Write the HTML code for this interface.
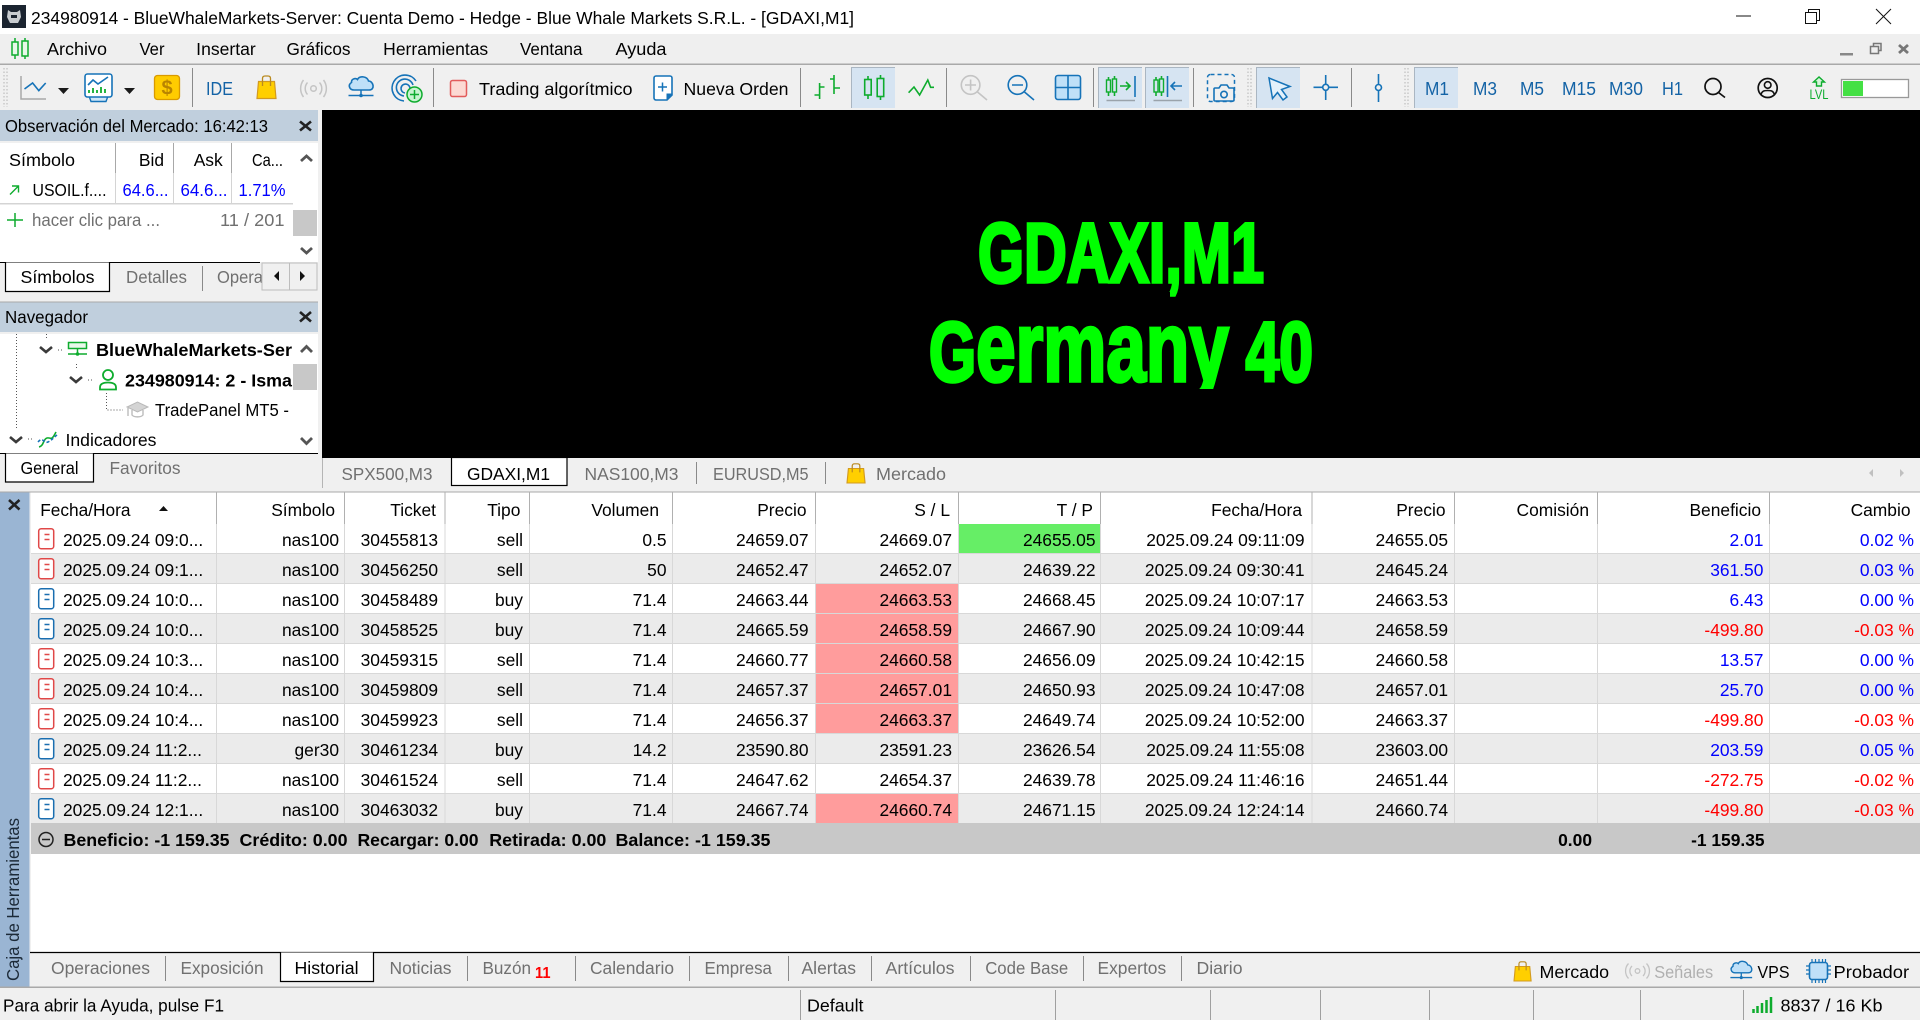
<!DOCTYPE html>
<html lang="es"><head><meta charset="utf-8"><title>GDAXI,M1</title>
<style>
html,body{margin:0;padding:0;width:1920px;height:1020px;overflow:hidden;background:#f0f0f0}
svg{display:block;position:absolute;left:0;top:0}
text{font-family:"Liberation Sans",sans-serif;font-size:17.4px;fill:#000;white-space:pre}
.g{fill:#707070}.e{text-anchor:end}.b{font-weight:bold}.u{fill:#0000ff}.r{fill:#ff0000}.l{fill:#b0b0b0}
.m{fill:#1463a6;text-anchor:middle}
.s{fill:none;stroke:#1673b8;stroke-width:1.6}.k{fill:none;stroke:#0eac2e;stroke-width:1.6}.y{fill:none;stroke:#c4c4c4;stroke-width:1.6}
.sep{stroke:#8a8a8a;stroke-width:1}
.d{stroke:#555;stroke-width:1;stroke-dasharray:1 2;fill:none}
.c{fill:none;stroke:#3a3a3a;stroke-width:2.6}
.x{fill:none;stroke:#222;stroke-width:2.6}
.h{font-size:84.5px;fill:#00ff00;stroke:#00ff00;stroke-width:3.6;font-weight:bold}
</style></head><body>
<svg width="1920" height="1020" viewBox="0 0 1920 1020" xmlns="http://www.w3.org/2000/svg">
<defs>
<g id="or"><rect x="38.7" y="528.7" width="15" height="20" rx="2.5" fill="#fff" stroke="#e04848" stroke-width="1.5"/><path d="M44.5 534.5h5M44.5 539.5h5" stroke="#e04848" stroke-width="1.5"/></g>
<g id="ob"><rect x="38.7" y="528.7" width="15" height="20" rx="2.5" fill="#fff" stroke="#1a6eb0" stroke-width="1.5"/><path d="M44.5 534.5h5M44.5 539.5h5" stroke="#1a6eb0" stroke-width="1.5"/></g>
<g id="bag"><path d="M1.5 6.5H17.5L19 23.5H0Z" fill="#ffcf00" stroke="#d29a20" stroke-width="1.2"/><path d="M5.5 11V3.5Q5.500 1 8 1H11Q13.500 1 13.500 3.500V11" fill="none" stroke="#b98a20" stroke-width="1.3"/></g>
<g id="cl"><path d="M354 90C349.500 90 347.500 85 351.500 82.500C351 79 355.500 77.500 357.500 79.500C359.500 75.500 367 76 368.500 81C373.500 81 375.500 90 369 90Z" fill="#bfe0f8" stroke="#1673b8" stroke-width="1.600"/><path d="M348.500 95.500h25M361 90v5.500" stroke="#1673b8" stroke-width="1.500"/><circle cx="361" cy="95.500" r="1.800" fill="#1673b8"/></g>
</defs>

<!-- title bar -->
<rect width="1920" height="34" fill="#fff"/>
<rect x="2" y="5" width="24" height="23" fill="#1b2430"/>
<path d="M8 10l3 2h6l3-2 1 7-3 6h-8l-3-6z" fill="#c8ccd0"/><path d="M11 15h6v3h-6z" fill="#1b2430"/>
<text x="31" y="24" textLength="823" lengthAdjust="spacingAndGlyphs">234980914 - BlueWhaleMarkets-Server: Cuenta Demo - Hedge - Blue Whale Markets S.R.L. - [GDAXI,M1]</text>
<path d="M1736 16h15" stroke="#111" stroke-width="1"/>
<path d="M1805.500 12.500h11v11h-11zM1808.500 12.500v-3h11v11h-3" fill="none" stroke="#111" stroke-width="1"/>
<path d="M1876 9l15 15M1891 9l-15 15" stroke="#111" stroke-width="1"/>

<!-- menu bar -->
<rect y="34" width="1920" height="30" fill="#efefef"/>
<rect y="63.500" width="1920" height="1.500" fill="#a9a9a9"/>
<path d="M15 38v21M25 38v21" stroke="#0eac2e" stroke-width="1.500"/>
<rect x="12" y="42" width="6" height="13" fill="#e8f8ea" stroke="#0eac2e" stroke-width="1.500"/>
<rect x="22" y="41" width="6" height="15" fill="#e8f8ea" stroke="#0eac2e" stroke-width="1.500"/>
<g>
<text x="47" y="55" textLength="60" lengthAdjust="spacingAndGlyphs">Archivo</text>
<text x="139.500" y="55" textLength="25" lengthAdjust="spacingAndGlyphs">Ver</text>
<text x="196.200" y="55" textLength="59.500" lengthAdjust="spacingAndGlyphs">Insertar</text>
<text x="286.500" y="55" textLength="64" lengthAdjust="spacingAndGlyphs">Gráficos</text>
<text x="383.200" y="55" textLength="105" lengthAdjust="spacingAndGlyphs">Herramientas</text>
<text x="520" y="55" textLength="62.500" lengthAdjust="spacingAndGlyphs">Ventana</text>
<text x="615.500" y="55" textLength="51" lengthAdjust="spacingAndGlyphs">Ayuda</text>
</g>
<rect x="1840" y="53" width="13" height="2.500" fill="#888"/>
<path d="M1870.500 46.500h8v7h-8zM1873.500 46v-2.500h7.500v7h-2.500" fill="none" stroke="#777" stroke-width="1.500"/>
<path d="M1899 45l9 8M1908 45l-9 8" stroke="#777" stroke-width="2.800"/>

<!-- toolbar -->
<rect y="65" width="1920" height="45" fill="#f0f0f0"/>
<path d="M4 68v39M7 68v39" stroke="#c8c8c8" stroke-width="1.500" stroke-dasharray="1.500 2"/>
<path d="M21 76V99H46" fill="none" stroke="#a8a8a8" stroke-width="1.500"/>
<path d="M24.500 89L32.600 83L38.800 90.600L45.700 83" class="s"/>
<path d="M58 88h11l-5.500 6z" fill="#1a1a1a"/>
<path d="M89 96L91 101.500H106L108 96" fill="#cfe6f8" stroke="#1673b8" stroke-width="1.400"/>
<rect x="85" y="74" width="27" height="23" rx="2.500" fill="#fff" stroke="#1673b8" stroke-width="1.600"/>
<path d="M89 93v-3M93 93v-5M97 93v-3M101 93v-6M105 93v-4" stroke="#0eac2e" stroke-width="1.800"/>
<path d="M88 85L93 80L98 84L108 77" class="s"/>
<path d="M124 88h11l-5.500 6z" fill="#1a1a1a"/>
<rect x="154.500" y="75.500" width="25" height="24" rx="3" fill="#ffcc00" stroke="#d99a00" stroke-width="1.300"/>
<text x="167" y="94.500" text-anchor="middle" style="font-size:20px;font-weight:bold;fill:#b98400">$</text>
<line class="sep" x1="192.500" y1="68" x2="192.500" y2="107"/>
<text x="206" y="95" textLength="27" lengthAdjust="spacingAndGlyphs" style="fill:#1463a6;font-size:18px">IDE</text>
<use href="#bag" x="257" y="75"/>
<g fill="none" stroke="#c4c4c4" stroke-width="1.500"><circle cx="313.500" cy="88.500" r="2.800"/><path d="M307.500 82.500a9 9 0 0 0 0 12M319.500 82.500a9 9 0 0 1 0 12M303.500 80a14 14 0 0 0 0 17M323.500 80a14 14 0 0 1 0 17"/></g>
<use href="#cl"/>
<g class="s"><path d="M416 81a13 13 0 1 0-12 20"/><path d="M413 85a8.500 8.500 0 1 0-9 11"/><path d="M410 89a4.500 4.500 0 1 0-5 4"/></g>
<circle cx="414.500" cy="94.500" r="7.500" fill="#c8f4d0" stroke="#0eac2e" stroke-width="1.500"/><path d="M410 94.500h9M414.500 90v9" stroke="#0eac2e" stroke-width="1.500"/>
<line class="sep" x1="433.500" y1="68" x2="433.500" y2="107"/>
<rect x="450.500" y="80.500" width="16" height="16" rx="2" fill="#fcd9d3" stroke="#e25b5b" stroke-width="1.500"/>
<text x="479" y="95" textLength="153.500" lengthAdjust="spacingAndGlyphs">Trading algorítmico</text>
<path d="M656 76h14a2 2 0 0 1 2 2v17l-5 5h-11a2 2 0 0 1-2-2V78a2 2 0 0 1 2-2z" fill="#fff" stroke="#1673b8" stroke-width="1.600"/>
<path d="M672 94h-5v6" fill="#1673b8" stroke="#1673b8"/>
<path d="M658 87h9M662.500 82.500v9" stroke="#1673b8" stroke-width="1.500"/>
<text x="683.500" y="95" textLength="105" lengthAdjust="spacingAndGlyphs">Nueva Orden</text>
<line class="sep" x1="800.500" y1="68" x2="800.500" y2="107"/>
<path d="M819.600 83V99M814.500 95H819.600M819.600 87H824.500M834 75V94M830 79H834M834 88H840" class="k"/>
<rect x="851" y="67" width="44" height="41" fill="#d6e4f2"/><path d="M851.500 108V67.500H895" fill="none" stroke="#aab6c2"/>
<path d="M868 76v23M880.500 75v25" class="k"/>
<rect x="864.700" y="79.500" width="6.500" height="15.500" fill="#d6e4f2" stroke="#0eac2e" stroke-width="1.600"/>
<rect x="877.200" y="78.500" width="6.500" height="18" fill="#d6e4f2" stroke="#0eac2e" stroke-width="1.600"/>
<path d="M908.600 92.700L914 87L919.600 95L927.800 80L930.600 87.300H934" class="k"/>
<line class="sep" x1="946.500" y1="68" x2="946.500" y2="107"/>
<circle cx="970.600" cy="85" r="9.300" class="y"/><path d="M977.500 92L987 100M965 85h11M970.600 79.500v11" class="y"/>
<circle cx="1017.500" cy="85" r="9.300" class="s"/><path d="M1024.500 92L1034 100M1012 85h11" class="s"/>
<rect x="1055.500" y="75.500" width="25" height="24" rx="2.500" fill="#bfe0f8" stroke="#1673b8" stroke-width="1.600"/><path d="M1068 75.500v24M1055.500 87.500h25" stroke="#1673b8" stroke-width="1.600"/>
<line class="sep" x1="1093.500" y1="68" x2="1093.500" y2="107"/>
<rect x="1098" y="67" width="44" height="41" fill="#d6e4f2"/><path d="M1098.500 108V67.500H1142" fill="none" stroke="#aab6c2"/>
<path d="M1108.500 77v19M1114.500 76v20" class="k"/><rect x="1106.500" y="80" width="4" height="12" fill="#d6e4f2" stroke="#0eac2e" stroke-width="1.400"/><rect x="1112.500" y="79" width="4" height="13" fill="#d6e4f2" stroke="#0eac2e" stroke-width="1.400"/>
<path d="M1120 86h10M1126 82l4 4l-4 4" fill="none" stroke="#0eac2e" stroke-width="1.600"/><path d="M1135 76v21" class="s"/>
<path d="M1106.500 100.500h28.500" stroke="#9aa3ab" stroke-width="1.500"/>
<rect x="1145" y="67" width="44" height="41" fill="#d6e4f2"/><path d="M1145.500 108V67.500H1189" fill="none" stroke="#aab6c2"/>
<path d="M1156 77v19M1161.500 76v20" class="k"/><rect x="1154" y="80" width="4" height="12" fill="#d6e4f2" stroke="#0eac2e" stroke-width="1.400"/><rect x="1159.500" y="79" width="4" height="13" fill="#d6e4f2" stroke="#0eac2e" stroke-width="1.400"/>
<path d="M1167.500 76v21M1171 86h11M1175 82l-4 4l4 4" class="s"/>
<path d="M1153.500 100.500h28.500" stroke="#9aa3ab" stroke-width="1.500"/>
<line class="sep" x1="1193.500" y1="68" x2="1193.500" y2="107"/>
<rect x="1207.500" y="74.500" width="27" height="27" rx="3" fill="none" stroke="#1673b8" stroke-width="1.500" stroke-dasharray="4 3"/>
<path d="M1215 88h4l2-3h6l2 3h4a1 1 0 0 1 1 1v11a1 1 0 0 1-1 1h-18a1 1 0 0 1-1-1V89a1 1 0 0 1 1-1z" fill="#f0f0f0" stroke="#1673b8" stroke-width="1.600"/><circle cx="1224" cy="94.500" r="3.200" class="s"/>
<path d="M1248 68v39M1251 68v39" stroke="#c8c8c8" stroke-width="1.500" stroke-dasharray="1.500 2"/>
<rect x="1256" y="67" width="44" height="41" fill="#d6e4f2"/><path d="M1256.500 108V67.500H1300" fill="none" stroke="#aab6c2"/>
<path d="M1269 78L1290 86.500L1281.500 89.500L1287 97L1283 100L1277.500 92.500L1272.500 98.500Z" fill="#e4f1fb" stroke="#1673b8" stroke-width="1.500"/>
<circle cx="1325.700" cy="87.300" r="3" class="s"/><path d="M1313.500 87.300h9M1329 87.300h9M1325.700 75v9M1325.700 90.500v9.500" class="s"/>
<line class="sep" x1="1351.500" y1="68" x2="1351.500" y2="107"/>
<circle cx="1378.500" cy="87.500" r="3" class="s"/><path d="M1378.500 74v10.500M1378.500 90.500v11.500" class="s"/>
<path d="M1405 68v39M1408 68v39" stroke="#c8c8c8" stroke-width="1.500" stroke-dasharray="1.500 2"/>
<rect x="1414" y="67" width="44" height="41" fill="#d6e4f2"/><path d="M1414.500 108V67.500H1458" fill="none" stroke="#aab6c2"/>
<text class="m" x="1437" y="95" style="font-size:18px" textLength="24" lengthAdjust="spacingAndGlyphs">M1</text>
<text class="m" x="1485" y="95" style="font-size:18px" textLength="24" lengthAdjust="spacingAndGlyphs">M3</text>
<text class="m" x="1532" y="95" style="font-size:18px" textLength="24" lengthAdjust="spacingAndGlyphs">M5</text>
<text class="m" x="1579" y="95" style="font-size:18px" textLength="34" lengthAdjust="spacingAndGlyphs">M15</text>
<text class="m" x="1626" y="95" style="font-size:18px" textLength="34" lengthAdjust="spacingAndGlyphs">M30</text>
<text class="m" x="1672.500" y="95" style="font-size:18px" textLength="21" lengthAdjust="spacingAndGlyphs">H1</text>
<circle cx="1713" cy="86.500" r="8" fill="none" stroke="#111" stroke-width="1.700"/><path d="M1718.500 92.500L1725 97.500" stroke="#111" stroke-width="1.700"/>
<circle cx="1767.700" cy="88" r="9.500" fill="none" stroke="#111" stroke-width="1.700"/><circle cx="1767.700" cy="85" r="3.300" fill="none" stroke="#111" stroke-width="1.600"/><path d="M1761 94.500c1-3.500 3-4 6.700-4s5.700.5 6.700 4" fill="none" stroke="#111" stroke-width="1.600"/>
<path d="M1819 77l-5.500 5h3v4h5v-4h3z" fill="#d8f5dc" stroke="#0eac2e" stroke-width="1.400"/>
<text x="1809.500" y="99" textLength="19" lengthAdjust="spacingAndGlyphs" style="font-size:13.500px;fill:#0eac2e">LVL</text>
<rect x="1841.500" y="79.500" width="67" height="18" fill="#fff" stroke="#999" stroke-width="1.300"/><rect x="1843" y="81" width="20" height="15" fill="#44e044"/>

<!-- chart -->
<rect x="322" y="110" width="1598" height="348" fill="#000"/>
<text class="h" x="978" y="282" textLength="286" lengthAdjust="spacingAndGlyphs">GDAXI,M1</text>
<rect x="1130" y="292" width="40" height="14" fill="#000"/>
<text class="h" x="929" y="381" textLength="384" lengthAdjust="spacingAndGlyphs">G<tspan style="font-size:99px">ermany</tspan> 40</text>
<rect x="1140" y="389" width="110" height="30" fill="#000"/>

<!-- market watch -->
<rect y="110" width="318" height="31" fill="#c0cfdd"/>
<text x="5" y="132" textLength="263" lengthAdjust="spacingAndGlyphs">Observación del Mercado: 16:42:13</text>
<path d="M300 121.500l11 9M311 121.500l-11 9" class="x"/>
<rect y="143" width="318" height="119" fill="#fff"/>
<path d="M115.500 143v30M173.500 143v30M231.500 143v30" stroke="#a8a8a8"/>
<path d="M115.500 173v30M173.500 173v30M231.500 173v30" stroke="#d4d4d4"/>
<rect y="203" width="293" height="1.500" fill="#d4d4d4"/>
<text x="9" y="166" textLength="66" lengthAdjust="spacingAndGlyphs">Símbolo</text>
<text class="e" x="164" y="166">Bid</text><text class="e" x="222.700" y="166">Ask</text>
<text x="252" y="166" textLength="31" lengthAdjust="spacingAndGlyphs">Ca...</text>
<path d="M10 194.500L18.500 186M12 186h6.500v6.500" fill="none" stroke="#0eac2e" stroke-width="1.400"/>
<text x="32.500" y="196" textLength="74" lengthAdjust="spacingAndGlyphs">USOIL.f....</text>
<text class="u" x="122.500" y="196" textLength="46" lengthAdjust="spacingAndGlyphs">64.6...</text>
<text class="u" x="180.500" y="196" textLength="47" lengthAdjust="spacingAndGlyphs">64.6...</text>
<text class="u" x="238.500" y="196" textLength="47" lengthAdjust="spacingAndGlyphs">1.71%</text>
<path d="M7 220h16M15 213v14" stroke="#0eac2e" stroke-width="1.500"/>
<text class="g" x="32" y="226" textLength="128" lengthAdjust="spacingAndGlyphs">hacer clic para ...</text>
<text class="g" x="220" y="226" textLength="64.500" lengthAdjust="spacingAndGlyphs">11 / 201</text>
<rect x="293" y="210" width="24" height="26" fill="#c8c8c8"/>
<path d="M301 161l5.500-5l5.500 5M301 248l5.500 5l5.500-5" class="c" style="stroke:#555;stroke-width:2.800"/>
<rect y="262" width="318" height="38" fill="#f0f0f0"/>
<path d="M0 262.500H260" stroke="#000" stroke-width="1"/>
<path d="M5.500 262.500V291.500H109.500V262.500" fill="#fff" stroke="#000" stroke-width="1.200"/>
<text x="20.500" y="283" textLength="74" lengthAdjust="spacingAndGlyphs">Símbolos</text>
<text class="g" x="126" y="283" textLength="61" lengthAdjust="spacingAndGlyphs">Detalles</text>
<line class="sep" x1="202.500" y1="266" x2="202.500" y2="291"/>
<text class="g" x="217" y="283" textLength="46" lengthAdjust="spacingAndGlyphs">Opera</text>
<rect x="262" y="263" width="27.500" height="27" fill="#f0f0f0" stroke="#bdbdbd"/><rect x="289.500" y="263" width="27.500" height="27" fill="#f0f0f0" stroke="#bdbdbd"/>
<path d="M279 271v10l-5-5zM300 271v10l5-5z" fill="#111"/>

<!-- navigator -->
<rect y="302" width="318" height="30" fill="#c0cfdd"/><rect y="301.500" width="318" height="1" fill="#a9a9a9"/>
<text x="5" y="323" textLength="83" lengthAdjust="spacingAndGlyphs">Navegador</text>
<path d="M300 312l11 9.500M311 312l-11 9.500" class="x"/>
<rect y="334" width="318" height="119" fill="#fff"/>
<path d="M16.500 334V428M46.500 334v4M76.500 364v5M106.500 393v17H123M58 350h5M88 380h5M28 439h5" class="d"/>
<path d="M40 347l6 5l6-5M70 377l6 5l6-5M10 437l6 5l6-5" class="c"/>
<rect x="68.500" y="342.500" width="18" height="6" fill="#e8f8ea" stroke="#0eac2e" stroke-width="1.500"/>
<path d="M68 354h19M77.500 349v5" stroke="#0eac2e" stroke-width="1.500"/><circle cx="77.500" cy="354" r="1.800" fill="#0eac2e"/>
<text class="b" x="96" y="356" textLength="196" lengthAdjust="spacingAndGlyphs">BlueWhaleMarkets-Ser</text>
<circle cx="108" cy="375" r="5" fill="#fff" stroke="#0eac2e" stroke-width="1.800"/>
<path d="M100 389.500v-2c0-3.500 3-5 8-5s8 1.500 8 5v2z" fill="#fff" stroke="#0eac2e" stroke-width="1.800"/>
<text class="b" x="125" y="386.500" textLength="167" lengthAdjust="spacingAndGlyphs">234980914: 2 - Isma</text>
<path d="M127 407l10.500-5l10.500 5l-10.500 5z" fill="#d4d4d4" stroke="#b8b8b8"/>
<path d="M132 410v5c2 2.500 9 2.500 11 0v-5M128 408v8" fill="none" stroke="#bcbcbc" stroke-width="1.400"/>
<text x="155" y="416" textLength="134" lengthAdjust="spacingAndGlyphs">TradePanel MT5 -</text>
<path d="M39 447c5-1 4-8 8-9s4 4 9-6" fill="none" stroke="#0eac2e" stroke-width="1.600"/>
<path d="M38 442c5-6 6 2 10 0s5-4 9-7" fill="none" stroke="#1673b8" stroke-width="1.600" stroke-dasharray="3 2"/>
<text x="65.500" y="446" textLength="91" lengthAdjust="spacingAndGlyphs">Indicadores</text>
<rect x="293" y="364" width="24" height="26" fill="#c8c8c8"/>
<path d="M301 352l5.500-5.500l5.500 5.500M301 438l5.500 5.500l5.500-5.500" class="c" style="stroke:#555;stroke-width:2.800"/>
<rect y="453" width="322" height="39" fill="#f0f0f0"/>
<path d="M0 453.500H318" stroke="#000" stroke-width="1"/>
<path d="M5.500 453.500V482H93.500V453.500" fill="#fff" stroke="#000" stroke-width="1.200"/>
<text x="20.500" y="474" textLength="58" lengthAdjust="spacingAndGlyphs">General</text>
<text class="g" x="109.500" y="474" textLength="71" lengthAdjust="spacingAndGlyphs">Favoritos</text>

<!-- chart tabs -->
<rect x="322" y="458" width="1598" height="34" fill="#f0f0f0"/>
<line class="sep" x1="322.500" y1="458" x2="322.500" y2="488" style="stroke:#b5b5b5"/>
<rect x="451.500" y="457.500" width="115.500" height="28" fill="#fff" stroke="#000" stroke-width="1.200"/>
<text class="g" x="341.500" y="480" textLength="91" lengthAdjust="spacingAndGlyphs">SPX500,M3</text>
<text x="467" y="480" textLength="83" lengthAdjust="spacingAndGlyphs">GDAXI,M1</text>
<text class="g" x="584.500" y="480" textLength="94" lengthAdjust="spacingAndGlyphs">NAS100,M3</text>
<line class="sep" x1="696.500" y1="462" x2="696.500" y2="484"/>
<text class="g" x="713" y="480" textLength="95.600" lengthAdjust="spacingAndGlyphs">EURUSD,M5</text>
<line class="sep" x1="825.500" y1="462" x2="825.500" y2="484"/>
<g transform="translate(847,463) scale(.95,.85)"><use href="#bag"/></g>
<text class="g" x="876" y="480" textLength="70" lengthAdjust="spacingAndGlyphs">Mercado</text>
<path d="M1873 469v8l-4-4zM1900 469v8l4-4z" fill="#c0c0c0"/>

<!-- left strip -->
<rect y="492" width="29.500" height="495" fill="#9ab5d3"/>
<rect x="0" y="491.500" width="1920" height="1" fill="#a9a9a9"/>
<path d="M9 500l10.500 9.500M19.500 500L9 509.500" class="x"/>
<text transform="translate(19,981) rotate(-90)" textLength="163" lengthAdjust="spacingAndGlyphs" style="fill:#1c2a38">Caja de Herramientas</text>

<!-- table bg -->
<rect x="31" y="492.500" width="1889" height="459.500" fill="#fff"/>
<rect x="31" y="554" width="1889" height="29" fill="#ebebeb"/>
<rect x="31" y="614" width="1889" height="29" fill="#ebebeb"/>
<rect x="31" y="674" width="1889" height="29" fill="#ebebeb"/>
<rect x="31" y="734" width="1889" height="29" fill="#ebebeb"/>
<rect x="31" y="794" width="1889" height="29" fill="#ebebeb"/>
<rect x="958" y="524" width="142.500" height="29" fill="#66ee66"/>
<rect x="815.500" y="584" width="142.500" height="119" fill="#ff9c9c"/>
<rect x="815.500" y="704" width="142.500" height="29" fill="#ff9c9c"/>
<rect x="815.500" y="794" width="142.500" height="29" fill="#ff9c9c"/>
<g stroke="#d8d8d8" stroke-width="1">
<path d="M31 553.500H1920M31 583.500H1920M31 613.500H1920M31 643.500H1920M31 673.500H1920M31 703.500H1920M31 733.500H1920M31 763.500H1920M31 793.500H1920" fill="none"/>
<path d="M216.500 524V823M344.500 524V823M445 524V823M529.500 524V823M672.500 524V823M815.500 524V823M958.500 524V823M1100.500 524V823M1312 524V823M1454.500 524V823M1597.500 524V823M1769.500 524V823" fill="none"/>
</g>
<path d="M216.500 492V524M344.500 492V524M445 492V524M529.500 492V524M672.500 492V524M815.500 492V524M958.500 492V524M1100.500 492V524M1312 492V524M1454.500 492V524M1597.500 492V524M1769.500 492V524" stroke="#b0b0b0" fill="none"/>

<!-- table header -->
<text x="40.200" y="516" textLength="90.300" lengthAdjust="spacingAndGlyphs">Fecha/Hora</text>
<path d="M159 511l4.500-5l4.500 5z" fill="#111"/>
<g class="e">
<text class="e" x="335" y="516">Símbolo</text><text class="e" x="436" y="516">Ticket</text><text class="e" x="520.400" y="516">Tipo</text><text class="e" x="659" y="516">Volumen</text><text class="e" x="806.500" y="516">Precio</text><text class="e" x="950" y="516">S / L</text><text class="e" x="1093" y="516">T / P</text><text class="e" x="1302" y="516">Fecha/Hora</text><text class="e" x="1445.500" y="516">Precio</text><text class="e" x="1589" y="516">Comisión</text><text class="e" x="1761" y="516">Beneficio</text><text class="e" x="1910.500" y="516">Cambio</text>
</g>

<!-- rows -->
<g><use href="#or"/><text x="63" y="546">2025.09.24 09:0...</text><text class="e" x="339" y="546">nas100</text><text class="e" x="438" y="546">30455813</text><text class="e" x="523" y="546">sell</text><text class="e" x="666.500" y="546">0.5</text><text class="e" x="808.500" y="546">24659.07</text><text class="e" x="952" y="546">24669.07</text><text class="e" x="1095.500" y="546">24655.05</text><text class="e" x="1304.500" y="546">2025.09.24 09:11:09</text><text class="e" x="1448" y="546">24655.05</text><text class="e u" x="1763.400" y="546">2.01</text><text class="e u" x="1914" y="546">0.02 %</text></g>
<g transform="translate(0,30)"><use href="#or"/><text x="63" y="546">2025.09.24 09:1...</text><text class="e" x="339" y="546">nas100</text><text class="e" x="438" y="546">30456250</text><text class="e" x="523" y="546">sell</text><text class="e" x="666.500" y="546">50</text><text class="e" x="808.500" y="546">24652.47</text><text class="e" x="952" y="546">24652.07</text><text class="e" x="1095.500" y="546">24639.22</text><text class="e" x="1304.500" y="546">2025.09.24 09:30:41</text><text class="e" x="1448" y="546">24645.24</text><text class="e u" x="1763.400" y="546">361.50</text><text class="e u" x="1914" y="546">0.03 %</text></g>
<g transform="translate(0,60)"><use href="#ob"/><text x="63" y="546">2025.09.24 10:0...</text><text class="e" x="339" y="546">nas100</text><text class="e" x="438" y="546">30458489</text><text class="e" x="523" y="546">buy</text><text class="e" x="666.500" y="546">71.4</text><text class="e" x="808.500" y="546">24663.44</text><text class="e" x="952" y="546">24663.53</text><text class="e" x="1095.500" y="546">24668.45</text><text class="e" x="1304.500" y="546">2025.09.24 10:07:17</text><text class="e" x="1448" y="546">24663.53</text><text class="e u" x="1763.400" y="546">6.43</text><text class="e u" x="1914" y="546">0.00 %</text></g>
<g transform="translate(0,90)"><use href="#ob"/><text x="63" y="546">2025.09.24 10:0...</text><text class="e" x="339" y="546">nas100</text><text class="e" x="438" y="546">30458525</text><text class="e" x="523" y="546">buy</text><text class="e" x="666.500" y="546">71.4</text><text class="e" x="808.500" y="546">24665.59</text><text class="e" x="952" y="546">24658.59</text><text class="e" x="1095.500" y="546">24667.90</text><text class="e" x="1304.500" y="546">2025.09.24 10:09:44</text><text class="e" x="1448" y="546">24658.59</text><text class="e r" x="1763.400" y="546">-499.80</text><text class="e r" x="1914" y="546">-0.03 %</text></g>
<g transform="translate(0,120)"><use href="#or"/><text x="63" y="546">2025.09.24 10:3...</text><text class="e" x="339" y="546">nas100</text><text class="e" x="438" y="546">30459315</text><text class="e" x="523" y="546">sell</text><text class="e" x="666.500" y="546">71.4</text><text class="e" x="808.500" y="546">24660.77</text><text class="e" x="952" y="546">24660.58</text><text class="e" x="1095.500" y="546">24656.09</text><text class="e" x="1304.500" y="546">2025.09.24 10:42:15</text><text class="e" x="1448" y="546">24660.58</text><text class="e u" x="1763.400" y="546">13.57</text><text class="e u" x="1914" y="546">0.00 %</text></g>
<g transform="translate(0,150)"><use href="#or"/><text x="63" y="546">2025.09.24 10:4...</text><text class="e" x="339" y="546">nas100</text><text class="e" x="438" y="546">30459809</text><text class="e" x="523" y="546">sell</text><text class="e" x="666.500" y="546">71.4</text><text class="e" x="808.500" y="546">24657.37</text><text class="e" x="952" y="546">24657.01</text><text class="e" x="1095.500" y="546">24650.93</text><text class="e" x="1304.500" y="546">2025.09.24 10:47:08</text><text class="e" x="1448" y="546">24657.01</text><text class="e u" x="1763.400" y="546">25.70</text><text class="e u" x="1914" y="546">0.00 %</text></g>
<g transform="translate(0,180)"><use href="#or"/><text x="63" y="546">2025.09.24 10:4...</text><text class="e" x="339" y="546">nas100</text><text class="e" x="438" y="546">30459923</text><text class="e" x="523" y="546">sell</text><text class="e" x="666.500" y="546">71.4</text><text class="e" x="808.500" y="546">24656.37</text><text class="e" x="952" y="546">24663.37</text><text class="e" x="1095.500" y="546">24649.74</text><text class="e" x="1304.500" y="546">2025.09.24 10:52:00</text><text class="e" x="1448" y="546">24663.37</text><text class="e r" x="1763.400" y="546">-499.80</text><text class="e r" x="1914" y="546">-0.03 %</text></g>
<g transform="translate(0,210)"><use href="#ob"/><text x="63" y="546">2025.09.24 11:2...</text><text class="e" x="339" y="546">ger30</text><text class="e" x="438" y="546">30461234</text><text class="e" x="523" y="546">buy</text><text class="e" x="666.500" y="546">14.2</text><text class="e" x="808.500" y="546">23590.80</text><text class="e" x="952" y="546">23591.23</text><text class="e" x="1095.500" y="546">23626.54</text><text class="e" x="1304.500" y="546">2025.09.24 11:55:08</text><text class="e" x="1448" y="546">23603.00</text><text class="e u" x="1763.400" y="546">203.59</text><text class="e u" x="1914" y="546">0.05 %</text></g>
<g transform="translate(0,240)"><use href="#or"/><text x="63" y="546">2025.09.24 11:2...</text><text class="e" x="339" y="546">nas100</text><text class="e" x="438" y="546">30461524</text><text class="e" x="523" y="546">sell</text><text class="e" x="666.500" y="546">71.4</text><text class="e" x="808.500" y="546">24647.62</text><text class="e" x="952" y="546">24654.37</text><text class="e" x="1095.500" y="546">24639.78</text><text class="e" x="1304.500" y="546">2025.09.24 11:46:16</text><text class="e" x="1448" y="546">24651.44</text><text class="e r" x="1763.400" y="546">-272.75</text><text class="e r" x="1914" y="546">-0.02 %</text></g>
<g transform="translate(0,270)"><use href="#ob"/><text x="63" y="546">2025.09.24 12:1...</text><text class="e" x="339" y="546">nas100</text><text class="e" x="438" y="546">30463032</text><text class="e" x="523" y="546">buy</text><text class="e" x="666.500" y="546">71.4</text><text class="e" x="808.500" y="546">24667.74</text><text class="e" x="952" y="546">24660.74</text><text class="e" x="1095.500" y="546">24671.15</text><text class="e" x="1304.500" y="546">2025.09.24 12:24:14</text><text class="e" x="1448" y="546">24660.74</text><text class="e r" x="1763.400" y="546">-499.80</text><text class="e r" x="1914" y="546">-0.03 %</text></g>

<!-- total bar -->
<rect x="31" y="823" width="1889" height="31" fill="#c8c8c8"/>
<circle cx="46" cy="839.500" r="7" fill="none" stroke="#222" stroke-width="1.500"/><path d="M42 839.500h8" stroke="#222" stroke-width="1.500"/>
<text class="b" x="63.500" y="846" textLength="166" lengthAdjust="spacingAndGlyphs">Beneficio: -1 159.35</text>
<text class="b" x="239.500" y="846" textLength="108" lengthAdjust="spacingAndGlyphs">Crédito: 0.00</text>
<text class="b" x="357.500" y="846" textLength="121" lengthAdjust="spacingAndGlyphs">Recargar: 0.00</text>
<text class="b" x="489.300" y="846" textLength="117" lengthAdjust="spacingAndGlyphs">Retirada: 0.00</text>
<text class="b" x="615.500" y="846" textLength="155" lengthAdjust="spacingAndGlyphs">Balance: -1 159.35</text>
<text class="b e" x="1592" y="846">0.00</text>
<text class="b e" x="1764.600" y="846">-1 159.35</text>

<!-- bottom tabs -->
<rect x="31" y="952" width="1889" height="35" fill="#f0f0f0"/>
<path d="M30 952.500H1920" stroke="#000" stroke-width="1.200"/>
<path d="M280.500 952.500V981.500H373.500V952.500" fill="#fff" stroke="#000" stroke-width="1.200"/>
<text class="g" x="51" y="974" textLength="99" lengthAdjust="spacingAndGlyphs">Operaciones</text>
<line class="sep" x1="165.500" y1="956" x2="165.500" y2="981"/>
<text class="g" x="180.500" y="974" textLength="83" lengthAdjust="spacingAndGlyphs">Exposición</text>
<text x="294.500" y="974" textLength="64" lengthAdjust="spacingAndGlyphs">Historial</text>
<text class="g" x="389.500" y="974" textLength="62" lengthAdjust="spacingAndGlyphs">Noticias</text>
<line class="sep" x1="467.500" y1="956" x2="467.500" y2="981"/>
<text class="g" x="482.500" y="974" textLength="48.500" lengthAdjust="spacingAndGlyphs">Buzón</text>
<text class="b r" x="535" y="978" textLength="15.500" lengthAdjust="spacingAndGlyphs" style="font-size:16px">11</text>
<line class="sep" x1="575.500" y1="956" x2="575.500" y2="981"/>
<text class="g" x="590" y="974" textLength="84" lengthAdjust="spacingAndGlyphs">Calendario</text>
<line class="sep" x1="689.500" y1="956" x2="689.500" y2="981"/>
<text class="g" x="704.500" y="974" textLength="67.400" lengthAdjust="spacingAndGlyphs">Empresa</text>
<line class="sep" x1="788.500" y1="956" x2="788.500" y2="981"/>
<text class="g" x="801.500" y="974" textLength="54.500" lengthAdjust="spacingAndGlyphs">Alertas</text>
<line class="sep" x1="871.500" y1="956" x2="871.500" y2="981"/>
<text class="g" x="885.500" y="974" textLength="69" lengthAdjust="spacingAndGlyphs">Artículos</text>
<line class="sep" x1="970.500" y1="956" x2="970.500" y2="981"/>
<text class="g" x="985.200" y="974" textLength="83" lengthAdjust="spacingAndGlyphs">Code Base</text>
<line class="sep" x1="1083.500" y1="956" x2="1083.500" y2="981"/>
<text class="g" x="1097.500" y="974" textLength="68.700" lengthAdjust="spacingAndGlyphs">Expertos</text>
<line class="sep" x1="1181.500" y1="956" x2="1181.500" y2="981"/>
<text class="g" x="1196.500" y="974" textLength="46" lengthAdjust="spacingAndGlyphs">Diario</text>

<g transform="translate(1514,961) scale(.9,.85)"><use href="#bag"/></g>
<text x="1539.500" y="978" textLength="69.600" lengthAdjust="spacingAndGlyphs">Mercado</text>
<g fill="none" stroke="#c4c4c4" stroke-width="1.300"><circle cx="1637.500" cy="971" r="2.300"/><path d="M1632 966a7 7 0 0 0 0 10M1643 966a7 7 0 0 1 0 10M1628.500 963.500a11 11 0 0 0 0 15M1646.500 963.500a11 11 0 0 1 0 15"/></g>
<text class="l" x="1654.200" y="978" textLength="59" lengthAdjust="spacingAndGlyphs">Señales</text>
<g transform="translate(1427.200,894.500) scale(.87)"><use href="#cl"/></g>
<text x="1757.500" y="978" textLength="32" lengthAdjust="spacingAndGlyphs">VPS</text>
<rect x="1809.500" y="962.500" width="18" height="17" rx="2.500" fill="#bfe0f8" stroke="#1673b8" stroke-width="1.600"/>
<path d="M1812 959v3M1815.500 959v3M1819 959v3M1822.500 959v3M1825.500 959v3M1812 980v3M1815.500 980v3M1819 980v3M1822.500 980v3M1825.500 980v3M1806 966h3M1806 970h3M1806 974h3M1828 966h3M1828 970h3M1828 974h3" stroke="#1673b8" stroke-width="1.200"/>
<text x="1833.500" y="978" textLength="75.600" lengthAdjust="spacingAndGlyphs">Probador</text>

<!-- status bar -->
<rect y="987" width="1920" height="33" fill="#f0f0f0"/>
<rect y="986.500" width="1920" height="1.500" fill="#a9a9a9"/>
<text x="3" y="1011.500" textLength="221" lengthAdjust="spacingAndGlyphs">Para abrir la Ayuda, pulse F1</text>
<text x="807" y="1011.500" textLength="56.500" lengthAdjust="spacingAndGlyphs">Default</text>
<path d="M800.500 990v30M1055.500 990v30M1210.500 990v30M1320.500 990v30M1429.500 990v30M1533.500 990v30M1640.500 990v30M1743.500 990v30" stroke="#a0a0a0"/>
<path d="M1753.500 1013v-4M1757.500 1013v-7M1762 1013v-10M1766.500 1013v-13M1771 1013v-16" stroke="#0eac2e" stroke-width="2.500"/>
<text x="1780.500" y="1011.500" textLength="102" lengthAdjust="spacingAndGlyphs">8837 / 16 Kb</text>
</svg>
</body></html>
